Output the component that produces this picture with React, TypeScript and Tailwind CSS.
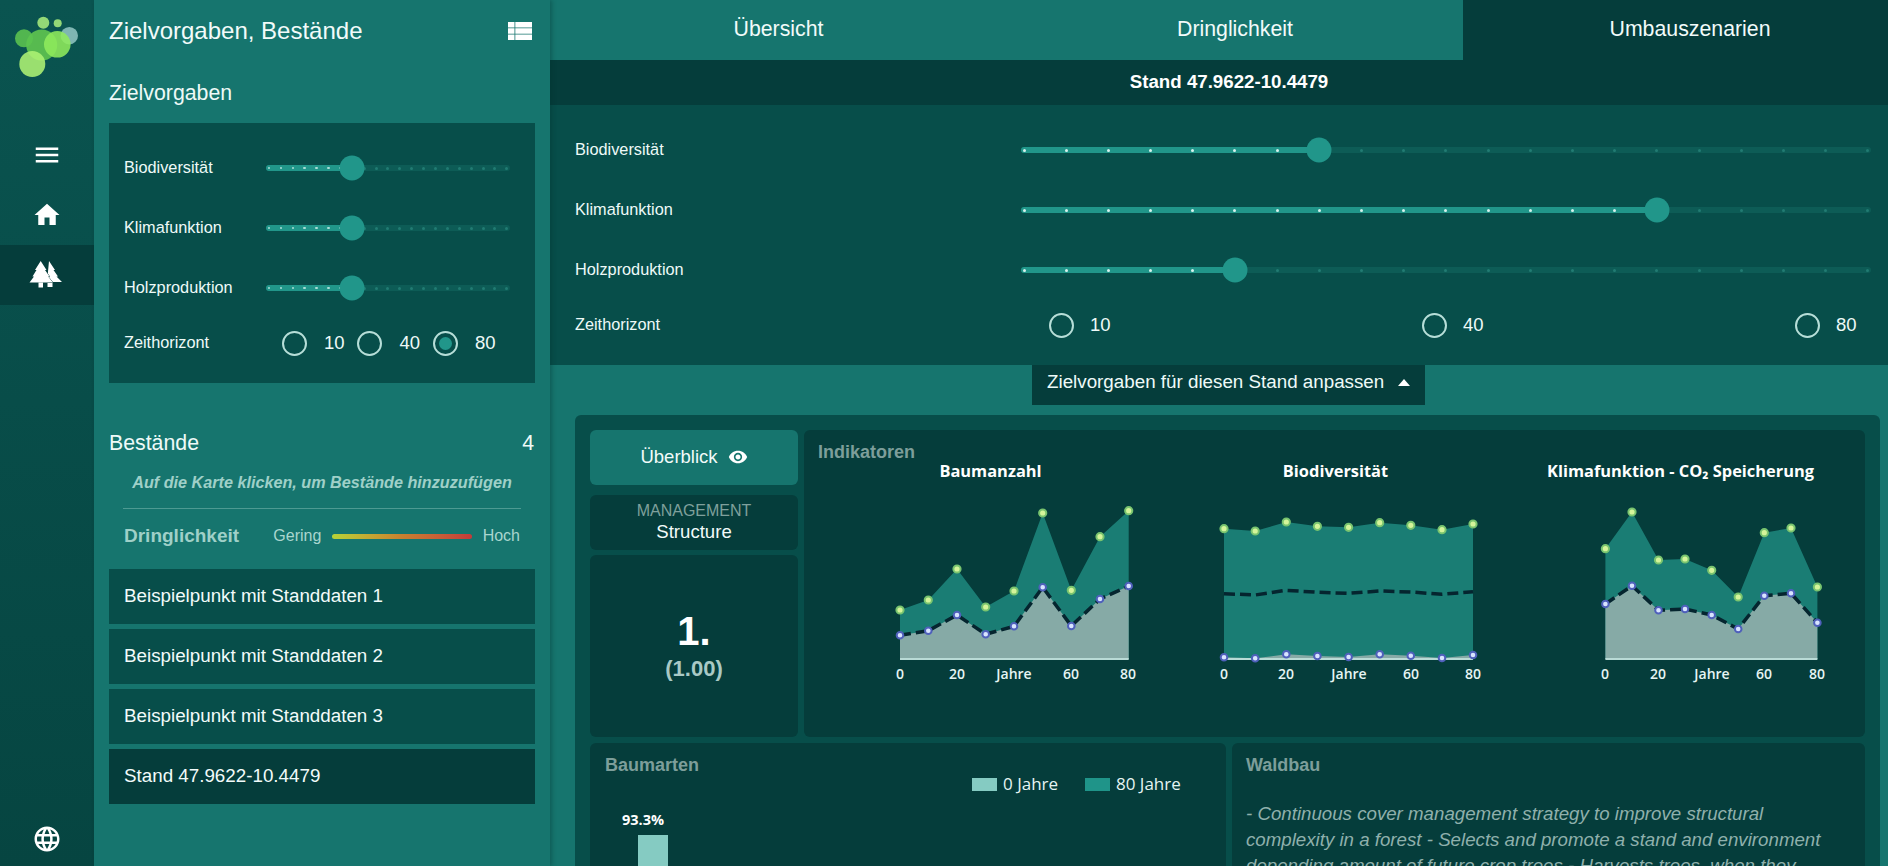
import React from "react";

const F = "font-['Liberation_Sans',Arial,sans-serif]";

const MENU = "M3 18h18v-2H3v2zm0-5h18v-2H3v2zm0-7v2h18V6H3z";
const HOME = "M10 20v-6h4v6h5v-8h3L12 3 2 12h3v8z";
const EYE = "M12 4.5C7 4.5 2.73 7.61 1 12c1.73 4.39 6 7.5 11 7.5s9.27-3.11 11-7.5c-1.73-4.39-6-7.5-11-7.5zM12 17c-2.76 0-5-2.24-5-5s2.24-5 5-5 5 2.24 5 5-2.24 5-5 5zm0-8c-1.66 0-3 1.34-3 3s1.34 3 3 3 3-1.34 3-3-1.34-3-3-3z";
const GLOBE = "M11.99 2C6.47 2 2 6.48 2 12s4.47 10 9.99 10C17.52 22 22 17.52 22 12S17.52 2 11.99 2zm6.93 6h-2.95c-.32-1.25-.78-2.45-1.38-3.56 1.84.63 3.37 1.91 4.33 3.56zM12 4.04c.83 1.2 1.48 2.53 1.91 3.96h-3.82c.43-1.43 1.08-2.76 1.91-3.96zM4.26 14C4.1 13.36 4 12.69 4 12s.1-1.36.26-2h3.38c-.08.66-.14 1.32-.14 2 0 .68.06 1.34.14 2H4.26zm.82 2h2.95c.32 1.25.78 2.45 1.38 3.56-1.84-.63-3.37-1.9-4.33-3.56zm2.95-8H5.08c.96-1.66 2.49-2.93 4.33-3.56C8.81 5.55 8.35 6.75 8.03 8zM12 19.96c-.83-1.2-1.48-2.53-1.91-3.96h3.82c-.43 1.43-1.08 2.76-1.91 3.96zM14.34 14H9.66c-.09-.66-.16-1.32-.16-2 0-.68.07-1.35.16-2h4.68c.09.65.16 1.32.16 2 0 .68-.07 1.34-.16 2zm.25 5.56c.6-1.11 1.06-2.31 1.38-3.56h2.95c-.96 1.65-2.49 2.93-4.33 3.56zM16.36 14c.08-.66.14-1.32.14-2 0-.68-.06-1.34-.14-2h3.38c.16.64.26 1.31.26 2s-.1 1.36-.26 2h-3.38z";

function Icon({ d, size, className = "" }: { d: string; size: number; className?: string }) {
  return (
    <svg width={size} height={size} viewBox="0 0 24 24" fill="#fff" className={className}>
      <path d={d} />
    </svg>
  );
}

function Logo() {
  const cs: [number, number, number, string][] = [
    [41.7, 45, 15.500, "#62c850"],
    [43.3, 22.7, 6, "#a6ea7c"],
    [57.7, 23.3, 4, "#a6ea7c"],
    [69.3, 35.7, 8.7, "#8fc4c0"],
    [24, 38.3, 9, "#5cc450"],
    [57.3, 44.3, 13.3, "#90ea5c"],
    [32.3, 64, 13, "#aef274"],
  ];
  return (
    <svg width="94" height="85" viewBox="0 0 94 85" className="shrink-0">
      {cs.map(([x, y, r, c], i) => (
        <circle key={i} cx={x} cy={y} r={r} fill={c} fillOpacity={0.88} />
      ))}
    </svg>
  );
}

function Trees() {
  return (
    <svg width="36" height="32" viewBox="10 10 36 32" fill="#fff">
      <path d="M30 12L36 21H34.500L39 27.500H37.500L43 33H28z" />
      <rect x="28.500" y="34" width="5" height="4" />
      <path d="M21.700 12L27.500 21H26L30.500 27.500H29L34 33.500H10.500L15 27.500H13.500L17.500 21H16z" stroke="#053d3b" strokeWidth="0.9" paintOrder="stroke" />
      <rect x="19.500" y="33.500" width="4.500" height="5" />
    </svg>
  );
}

function Slider({ value, label, labelW, big }: { value: number; label: string; labelW: string; big?: boolean }) {
  const pct = (3 + (value / 20) * (big ? 844 : 236)) / (big ? 850 : 243) * 100;
  return (
    <div className="flex h-[60px] items-center">
      <div className={`${labelW} pb-[2px] text-[16.3px] text-[#eefaf8]`}>{label}</div>
      <div className="relative h-[6px] flex-1 rounded-full bg-[#0d5c56]">
        <div className="absolute inset-y-0 left-0 rounded-full bg-[#21968a]" style={{ width: pct + "%" }} />
        <div className="absolute inset-y-0 left-[3px] right-[3px] flex items-center justify-between">
          {Array.from({ length: 21 }).map((_, i) => (
            <span
              key={i}
              className={
                i < value
                  ? big
                    ? "-mx-[1.5px] h-[3px] w-[3px] rounded-full bg-[#d6f2ee]"
                    : "-mx-[1.25px] h-[2.5px] w-[2.5px] rounded-full bg-[#a9dcd5]"
                  : "-mx-[1.5px] h-[3px] w-[3px] rounded-full bg-[#217b72]"
              }
            />
          ))}
        </div>
        <div
          className="absolute top-1/2 h-[25px] w-[25px] -translate-x-1/2 -translate-y-1/2 rounded-full bg-[#21968a]"
          style={{ left: pct + "%" }}
        />
      </div>
    </div>
  );
}

function Radio({ label, checked, className, gap }: { label: string; checked?: boolean; className: string; gap: string }) {
  return (
    <div className={`flex items-center ${className} ${gap}`}>
      <span className="flex h-[25px] w-[25px] shrink-0 items-center justify-center rounded-full border-2 border-[#b7ded8]">
        {checked && <span className="h-[13px] w-[13px] rounded-full bg-[#21968a]" />}
      </span>
      <span className="text-[18.5px] leading-none text-[#eefaf8]">{label}</span>
    </div>
  );
}

function ListItem({ children, active }: { children: React.ReactNode; active?: boolean }) {
  return (
    <div className={`mb-[5px] flex h-[55px] items-center px-[15px] text-[18.8px] text-[#f2fbfa] ${active ? "bg-[#053d3b]" : "bg-[#074e4a]"}`}>
      {children}
    </div>
  );
}

function Chart({
  title, xs, top, bottom, dash, ticks,
}: {
  title: string; xs: number[]; top: number[]; bottom: number[]; dash?: number[]; ticks: [string, number][];
}) {
  const base = 177;
  const area = (ys: number[]) => `${xs[0]},${base} ` + xs.map((x, i) => `${x},${ys[i]}`).join(" ") + ` ${xs[xs.length - 1]},${base}`;
  const line = (ys: number[]) => xs.map((x, i) => `${x},${ys[i]}`).join(" ");
  return (
    <div>
      <div className="-mt-[1px] mb-[1px] h-[20px] whitespace-nowrap text-center font-['Open_Sans',sans-serif] text-[16.4px] font-bold leading-[20px] text-white">{title}</div>
      <svg width="345" height="205" viewBox="0 0 345 205" className="block">
        <polygon points={area(top)} fill="#1a7d74" />
        <polygon points={area(bottom)} fill="#86aaa6" />
        <line x1={xs[0]} x2={xs[xs.length - 1]} y1={base} y2={base} stroke="#b9dbd6" strokeWidth="2" />
        <polyline points={line(dash ?? bottom)} fill="none" stroke="#05252f" strokeWidth="3.5" strokeDasharray="11 5" />
        {xs.map((x, i) => (
          <circle key={"g" + i} cx={x} cy={top[i]} r="3.600" fill="#d5f59a" stroke="#79c46f" strokeWidth="2" />
        ))}
        {xs.map((x, i) => (
          <circle key={"b" + i} cx={x} cy={bottom[i]} r="3.300" fill="#d8e4ff" stroke="#4f60bb" strokeWidth="2" />
        ))}
        {ticks.map(([t, x]) => (
          <text key={t} x={x} y="197" textAnchor="middle" fontFamily="'Open Sans', sans-serif" fontSize="14" fontWeight="600" fill="#e6f5f3">
            {t}
          </text>
        ))}
      </svg>
    </div>
  );
}

const off = (a: number[], d: number) => a.map((v) => +(v - d).toFixed(1));

export default function App() {
  return (
    <div className={`flex h-screen w-full overflow-hidden bg-[#16756e] ${F}`}>
      {/* Nav */}
      <nav className="flex w-[94px] shrink-0 flex-col bg-gradient-to-b from-[#0a5450] to-[#064541]">
        <Logo />
        <div className="mt-[40px] flex h-[60px] items-center justify-center"><Icon d={MENU} size={30} /></div>
        <div className="flex h-[60px] items-center justify-center"><Icon d={HOME} size={30} /></div>
        <div className="flex h-[60px] items-center justify-center bg-[#053d3b]"><Trees /></div>
        <div className="mb-[12px] mt-auto flex justify-center"><Icon d={GLOBE} size={30} /></div>
      </nav>

      {/* Left panel */}
      <aside className="z-10 w-[456px] shrink-0 bg-[#16756e] px-[15px] pt-[17px] text-white shadow-[2px_0_4px_rgba(0,50,45,0.35)]">
        <div className="flex items-center justify-between pr-[3px]">
          <h1 className="text-[24px] font-normal leading-[28px] text-[#f2fbfa]">Zielvorgaben, Bestände</h1>
          <svg width="24" height="18" viewBox="0 0 24 18" fill="#fff">
            <rect x="0" y="0" width="6.500" height="5.500" /><rect x="7.300" y="0" width="16.700" height="5.500" />
            <rect x="0" y="6.250" width="6.500" height="5.500" /><rect x="7.300" y="6.250" width="16.700" height="5.500" />
            <rect x="0" y="12.500" width="6.500" height="5.500" /><rect x="7.300" y="12.500" width="16.700" height="5.500" />
          </svg>
        </div>
        <h2 className="mt-[36px] text-[21.3px] font-normal leading-[24px] text-[#eefaf8]">Zielvorgaben</h2>

        <section className="mt-[18px] bg-[#074e4a] px-[15px] pb-[15px] pt-[15px]">
          <div className="pr-[10px]">
            <Slider label="Biodiversität" value={7} labelW="w-[142px]" />
            <Slider label="Klimafunktion" value={7} labelW="w-[142px]" />
            <Slider label="Holzproduktion" value={7} labelW="w-[142px]" />
          </div>
          <div className="flex h-[50px] items-center">
            <div className="w-[157.5px] pb-[2px] text-[16.3px] text-[#eefaf8]">Zeithorizont</div>
            <Radio label="10" className="w-[75.5px]" gap="gap-[17.5px]" />
            <Radio label="40" className="w-[75.5px]" gap="gap-[17.5px]" />
            <Radio label="80" checked className="w-[75.5px]" gap="gap-[17.5px]" />
          </div>
        </section>

        <div className="mt-[48px] flex items-center justify-between text-[21.3px] leading-[24px] text-[#eefaf8]">
          <span>Bestände</span>
          <span className="pr-[1px]">4</span>
        </div>
        <p className="mt-[18px] whitespace-nowrap text-center text-[16.2px] font-bold italic leading-[18px] text-[#9fd0c8]">
          Auf die Karte klicken, um Bestände hinzuzufügen
        </p>
        <div className="mx-[14px] mt-[17px] h-px bg-[#4d9a92]" />
        <div className="mt-[16px] flex h-[22px] items-center px-[15px]">
          <span className="w-[150px] text-[19px] font-bold text-[#9fd0c8]">Dringlichkeit</span>
          <span className="text-[16px] text-[#a9d6cf]">Gering</span>
          <span className="mx-[11px] h-[5px] w-[140px] rounded-full bg-gradient-to-r from-[#b5d337] via-[#c8802f] to-[#c43a3a]" />
          <span className="text-[16px] text-[#a9d6cf]">Hoch</span>
        </div>
        <div className="mt-[22px]">
          <ListItem>Beispielpunkt mit Standdaten 1</ListItem>
          <ListItem>Beispielpunkt mit Standdaten 2</ListItem>
          <ListItem>Beispielpunkt mit Standdaten 3</ListItem>
          <ListItem active>Stand 47.9622-10.4479</ListItem>
        </div>
      </aside>

      {/* Main */}
      <main className="min-w-0 flex-1 text-white">
        <div className="flex h-[60px] text-[21.3px] text-[#f2fbfa]">
          <div className="flex w-[457px] shrink-0 items-center justify-center bg-[#16756e]">Übersicht</div>
          <div className="flex w-[456px] shrink-0 items-center justify-center bg-[#16756e]">Dringlichkeit</div>
          <div className="flex w-[454px] shrink-0 items-center justify-center bg-[#053d3b]">Umbauszenarien</div>
        </div>
        <div className="flex h-[45px] items-center justify-center bg-[#053d3b] pl-[20px] text-[18.7px] font-bold">Stand 47.9622-10.4479</div>
        <section className="bg-[#074e4a] pb-[15px] pl-[25px] pr-[17px] pt-[15px]">
          <Slider label="Biodiversität" value={7} labelW="w-[446px]" big />
          <Slider label="Klimafunktion" value={15} labelW="w-[446px]" big />
          <Slider label="Holzproduktion" value={5} labelW="w-[446px]" big />
          <div className="flex h-[50px] items-center">
            <div className="w-[473.5px] pb-[2px] text-[16.3px] text-[#eefaf8]">Zeithorizont</div>
            <Radio label="10" className="w-[373px]" gap="gap-[16.5px]" />
            <Radio label="40" className="w-[373px]" gap="gap-[16.5px]" />
            <Radio label="80" className="w-[60px]" gap="gap-[16.5px]" />
          </div>
        </section>
        <div className="ml-[482px] flex h-[40px] w-[393px] items-center gap-[14px] bg-[#053d3b] pb-[5px] pl-[15px] text-[18.8px] text-[#eefaf8]">
          Zielvorgaben für diesen Stand anpassen
          <span className="h-0 w-0 border-x-[6px] border-b-[7px] border-x-transparent border-b-white" />
        </div>

        <section className="ml-[25px] mr-[8px] mt-[10px] h-[600px] rounded-[6px] bg-[#074e4a] p-[15px]">
          <div className="flex gap-[6px]">
            <div className="flex w-[208px] shrink-0 flex-col">
              <div className="flex h-[55px] items-center justify-center gap-[10px] rounded-[6px] bg-[#16756e] pb-[1px] text-[18.5px] text-[#f2fbfa]">
                Überblick <Icon d={EYE} size={20} />
              </div>
              <div className="mt-[10px] flex h-[55px] flex-col items-center justify-center rounded-[6px] bg-[#053d3b] pb-[2px]">
                <span className="text-[16px] leading-[20px] text-[#7fa09c]">MANAGEMENT</span>
                <span className="text-[18.6px] leading-[22px] text-[#f2fbfa]">Structure</span>
              </div>
              <div className="mt-[5px] flex h-[182px] flex-col items-center rounded-[6px] bg-[#053d3b] pt-[52px]">
                <span className="text-[40px] font-bold leading-[48px]">1.</span>
                <span className="mt-[2px] text-[22px] font-bold leading-[24px] text-[#a9c9c5]">(1.00)</span>
              </div>
            </div>
            <div className="h-[307px] flex-1 rounded-[6px] bg-[#053d3b] pl-[14px] pt-[12px]">
              <div className="h-[20px] text-[18px] font-bold leading-[20px] text-[#7d9e9a]">Indikatoren</div>
              <div className="grid grid-cols-[345px_345px_345px]">
                <Chart
                  title="Baumanzahl"
                  xs={off([900, 928.3, 957, 985.7, 1014, 1042.7, 1071.3, 1100, 1128.7], 818)}
                  top={off([610, 600, 569, 607, 591, 513, 590.3, 536.7, 510.7], 482)}
                  bottom={off([635.3, 630.7, 615, 634.3, 626.3, 587.3, 626, 599, 586], 482)}
                  ticks={[["0", 82], ["20", 139], ["Jahre", 196], ["60", 253], ["80", 310]]}
                />
                <Chart
                  title="Biodiversität"
                  xs={off([1224, 1255.2, 1286.3, 1317.4, 1348.6, 1379.7, 1410.8, 1442, 1473], 1163)}
                  top={off([528.7, 531, 522, 526.3, 527.3, 522.7, 525.3, 529.7, 524], 482)}
                  bottom={off([657.3, 658.3, 654.3, 656, 657, 654.3, 655.7, 658, 655], 482)}
                  dash={off([593.7, 595, 590.3, 592.3, 593.3, 591, 592, 594.3, 591.7], 482)}
                  ticks={[["0", 61], ["20", 123], ["Jahre", 186], ["60", 248], ["80", 310]]}
                />
                <Chart
                  title="Klimafunktion - CO₂ Speicherung"
                  xs={off([1605.4, 1632, 1658.5, 1685, 1711.7, 1738.2, 1764.3, 1791, 1817.4], 1508)}
                  top={off([548.7, 512, 560, 559, 570.3, 597, 532.7, 528, 587], 482)}
                  bottom={off([604, 585.7, 610.3, 609, 615, 629, 595.7, 593.3, 622.7], 482)}
                  ticks={[["0", 97], ["20", 150], ["Jahre", 204], ["60", 256], ["80", 309]]}
                />
              </div>
            </div>
          </div>

          <div className="mt-[6px] flex gap-[6px]">
            <div className="h-[300px] w-[636px] shrink-0 rounded-[6px] bg-[#053d3b] pl-[15px] pt-[11px]">
              <div className="text-[18px] font-bold leading-[22px] text-[#7d9e9a]">Baumarten</div>
              <div className="-mt-[2px] ml-[367px] flex items-center font-['Open_Sans',sans-serif] text-[17px] text-[#e6f5f3]">
                <span className="mr-[6px] h-[13px] w-[25px] bg-[#85cbc2]" />
                <span className="w-[82px] leading-[20px]">0 Jahre</span>
                <span className="mr-[6px] h-[13px] w-[25px] bg-[#1f9489]" />
                <span className="leading-[20px]">80 Jahre</span>
              </div>
              <div className="ml-[33px] mt-[17px] w-[30px]">
                <div className="-ml-[22px] -mr-[2px] text-center font-['Open_Sans',sans-serif] text-[14.5px] font-bold leading-[18px]">93.3%</div>
                <div className="mt-[6px] h-[100px] bg-[#85cbc2]" />
              </div>
            </div>
            <div className="h-[300px] flex-1 rounded-[6px] bg-[#053d3b] pl-[14px] pt-[11px]">
              <div className="text-[18px] font-bold leading-[22px] text-[#7d9e9a]">Waldbau</div>
              <p className="mt-[25px] whitespace-nowrap text-[18.7px] italic leading-[26px] text-[#8fb0ac]">
                - Continuous cover management strategy to improve structural<br />
                complexity in a forest - Selects and promote a stand and environment<br />
                depending amount of future crop trees - Harvests trees, when they
              </p>
            </div>
          </div>
        </section>
      </main>
    </div>
  );
}
